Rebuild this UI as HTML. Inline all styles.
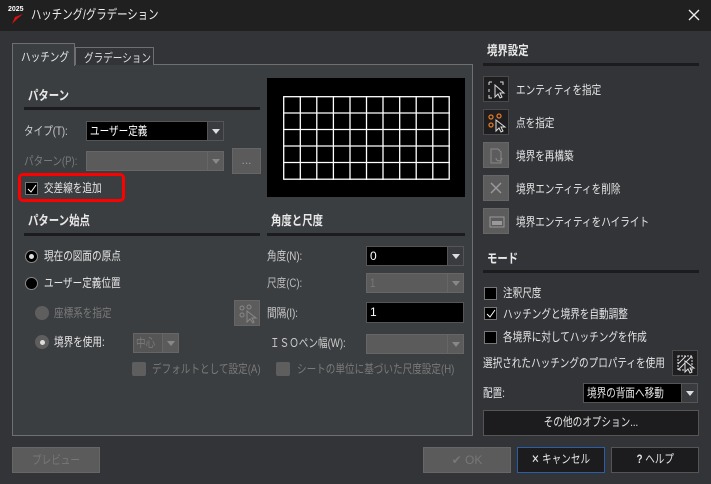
<!DOCTYPE html>
<html><head><meta charset="utf-8"><style>
*{box-sizing:border-box;margin:0;padding:0}
body{width:711px;height:484px;background:#333438;font-family:"Liberation Sans","Noto Sans CJK JP",sans-serif;font-size:12px;color:#e6e6e6;position:relative;overflow:hidden}
.a{position:absolute;white-space:nowrap}
.t{line-height:14px;transform:scaleX(0.8);transform-origin:0 0}
.s{display:inline-block;transform:scaleX(0.8)}
.dis{color:#7a7a7a}
.hdr{font-size:13px;font-weight:bold;color:#e8e8e8}
.line{position:absolute;height:3px;background:#1c1c1e}
.inp{position:absolute;background:#000;border:1px solid #555;color:#fff;padding-left:3px;line-height:18px}
.dd{position:absolute;background:#3a3b3e;border:1px solid #555}
.dd:after{content:"";position:absolute;left:4px;top:7px;border-left:4px solid transparent;border-right:4px solid transparent;border-top:5px solid #ddd}
.ddd{position:absolute;background:#5b5b5b;border:1px solid #666}
.dda{position:absolute;background:#5b5b5b;border:1px solid #666}
.dda:after{content:"";position:absolute;left:4px;top:7px;border-left:4px solid transparent;border-right:4px solid transparent;border-top:5px solid #888}
.cb{position:absolute;width:13px;height:13px;background:#000;border:1px solid #777}
.cbd{position:absolute;width:14px;height:14px;background:#5e5e5e;border-radius:2px}
.rad{position:absolute;width:13px;height:13px;border-radius:50%;background:#000;border:1px solid #888}
.btn{position:absolute;border:1px solid #555;background:#1c1c1e;color:#e6e6e6;text-align:center;line-height:23px}
.ib{position:absolute;width:26px;height:26px;border:1px solid #4a4a4a;background:#1e1e20}
.ibd{position:absolute;width:26px;height:26px;background:#5c5c5c;border:1px solid #666}
</style></head><body>
<div class="a" style="left:0;top:0;width:711px;height:31px;background:#202020"></div>
<div class="a" style="left:8px;top:6px;font-size:7px;font-weight:bold;color:#fff;line-height:8px">2025</div>
<svg class="a" style="left:11px;top:13px" width="14" height="12"><path d="M12 1 L4 4 L1 11 L6 6 Z" fill="#e01010"/></svg>
<div class="a t" style="left:31px;top:8px;font-size:13px;color:#f0f0f0">ハッチング/グラデーション</div>
<svg class="a" style="left:688px;top:9px" width="12" height="12"><path d="M1 1L11 11M11 1L1 11" stroke="#eee" stroke-width="1.3"/></svg>

<div class="a" style="left:12px;top:64px;width:461px;height:372px;background:#3b3e40;border:1px solid #6f6f6f"></div>
<div class="a" style="left:12px;top:43px;width:63px;height:23px;background:#3b3e40;border:1px solid #6f6f6f;border-bottom:none"></div>
<div class="a t" style="left:21px;top:50px">ハッチング</div>
<div class="a" style="left:75px;top:47px;width:79px;height:18px;background:#333438;border:1px solid #6f6f6f;border-bottom:none"></div>
<div class="a t" style="left:84px;top:51px;color:#ddd">グラデーション</div>

<div class="a t hdr" style="left:28px;top:89px">パターン</div>
<div class="line" style="left:24px;top:107px;width:236px"></div>
<div class="a t" style="left:24px;top:124px;color:#ccc">タイプ(T):</div>
<div class="inp" style="left:86px;top:121px;width:122px;height:20px"><span class="s" style="transform-origin:0 0">ユーザー定義</span></div>
<div class="dd" style="left:207px;top:121px;width:17px;height:20px"></div>
<div class="a t dis" style="left:24px;top:154px">パターン(P):</div>
<div class="ddd" style="left:86px;top:151px;width:122px;height:20px;border-right:none"></div>
<div class="dda" style="left:207px;top:151px;width:17px;height:20px"></div>
<div class="a" style="left:232px;top:148px;width:29px;height:26px;background:#5b5b5b;border:1px solid #666;color:#999;text-align:center;line-height:22px">...</div>
<div class="a" style="left:18px;top:173px;width:107px;height:29px;border:3px solid #f00;border-radius:5px"></div>
<div class="cb" style="left:25px;top:182px"></div>
<svg class="a" style="left:27px;top:184px" width="10" height="9"><path d="M1 5L4 8L9 1" stroke="#fff" fill="none" stroke-width="1"/></svg>
<div class="a t" style="left:44px;top:181px">交差線を追加</div>

<div class="a" style="left:267px;top:78px;width:198px;height:119px;background:#000"></div>
<svg class="a" style="left:283px;top:96px" width="167" height="84"><g stroke="#fff" stroke-width="1.3" fill="none">
<rect x="0.7" y="0.7" width="165.5" height="82.5"/>
<path d="M17.3 0V84M33.8 0V84M50.4 0V84M67 0V84M83.5 0V84M100 0V84M116.7 0V84M133.2 0V84M149.8 0V84M0 17H167M0 33.5H167M0 50H167M0 66.5H167"/></g></svg>

<div class="a t hdr" style="left:28px;top:214px">パターン始点</div>
<div class="line" style="left:24px;top:233px;width:236px"></div>
<div class="rad" style="left:25px;top:250px"></div><div class="a" style="left:29px;top:254px;width:5px;height:5px;border-radius:50%;background:#ddd"></div>
<div class="a t" style="left:44px;top:249px">現在の図面の原点</div>
<div class="rad" style="left:25px;top:277px"></div>
<div class="a t" style="left:44px;top:276px">ユーザー定義位置</div>
<div class="a" style="left:35px;top:306px;width:14px;height:14px;border-radius:50%;background:#5e5e5e"></div>
<div class="a t dis" style="left:54px;top:306px">座標系を指定</div>
<div class="ibd" style="left:234px;top:300px"></div>
<svg class="a" style="left:238px;top:304px" width="20" height="20"><g stroke="#888" fill="none"><circle cx="4" cy="4" r="2"/><circle cx="4" cy="11" r="2"/><circle cx="11" cy="3" r="2"/><path d="M9 7L9 18L12 15L15 19L16 18L14 14L18 14Z"/></g></svg>
<div class="a" style="left:35px;top:335px;width:14px;height:14px;border-radius:50%;background:#5e5e5e"></div><div class="a" style="left:40px;top:340px;width:5px;height:5px;border-radius:50%;background:#ddd"></div>
<div class="a t" style="left:54px;top:335px">境界を使用:</div>
<div class="a" style="left:133px;top:333px;width:30px;height:20px;background:#555;border:1px solid #666"></div>
<div class="a t dis" style="left:136px;top:336px">中心</div>
<div class="dda" style="left:162px;top:333px;width:17px;height:20px"></div>
<div class="cbd" style="left:132px;top:362px"></div>
<div class="a t dis" style="left:152px;top:362px">デフォルトとして設定(A)</div>

<div class="a t hdr" style="left:271px;top:214px">角度と尺度</div>
<div class="line" style="left:267px;top:233px;width:198px"></div>
<div class="a t" style="left:267px;top:249px;color:#ccc">角度(N):</div>
<div class="inp" style="left:366px;top:246px;width:82px;height:20px">0</div>
<div class="dd" style="left:447px;top:246px;width:17px;height:20px"></div>
<div class="a t" style="left:267px;top:276px;color:#bbb">尺度(C):</div>
<div class="ddd" style="left:366px;top:273px;width:82px;height:20px;border-right:none"></div>
<div class="a t dis" style="left:370px;top:276px">1</div>
<div class="dda" style="left:447px;top:273px;width:17px;height:20px"></div>
<div class="a t" style="left:267px;top:306px;color:#ccc">間隔(I):</div>
<div class="inp" style="left:366px;top:302px;width:98px;height:21px">1</div>
<div class="a t" style="left:270px;top:336px;color:#ccc">ＩＳＯペン幅(W):</div>
<div class="ddd" style="left:366px;top:334px;width:82px;height:20px;border-right:none"></div>
<div class="dda" style="left:447px;top:334px;width:17px;height:20px"></div>
<div class="cbd" style="left:276px;top:362px"></div>
<div class="a t dis" style="left:297px;top:362px">シートの単位に基づいた尺度設定(H)</div>

<div class="a t hdr" style="left:487px;top:44px">境界設定</div>
<div class="line" style="left:483px;top:63px;width:216px"></div>
<div class="ib" style="left:483px;top:76px"></div>
<svg class="a" style="left:487px;top:80px" width="20" height="20"><g stroke="#ddd" fill="none"><path d="M2 2h3M2 2v3M2 9v3M2 15v3h3M13 2h3v3"/><path d="M8 5L8 17L11 14L13 18L15 17L13 13L17 13Z"/></g></svg>
<div class="a t" style="left:516px;top:83px">エンティティを指定</div>
<div class="ib" style="left:483px;top:109px"></div>
<svg class="a" style="left:487px;top:113px" width="20" height="20"><g stroke="#e07820" fill="none" stroke-width="1.3"><circle cx="4" cy="4" r="2"/><circle cx="4" cy="12" r="2"/><circle cx="12" cy="3" r="2"/></g><path d="M9 7L9 18L12 15L14 19L16 18L14 14L18 14Z" stroke="#ddd" fill="none"/></svg>
<div class="a t" style="left:516px;top:116px">点を指定</div>
<div class="ibd" style="left:483px;top:142px"></div>
<svg class="a" style="left:487px;top:146px" width="20" height="20"><g stroke="#888" fill="none"><path d="M4 3h7l3 3v11H4z"/><path d="M9 12a3 3 0 1 0 6 0"/></g></svg>
<div class="a t" style="left:516px;top:149px">境界を再構築</div>
<div class="ibd" style="left:483px;top:175px"></div>
<svg class="a" style="left:489px;top:181px" width="14" height="14"><path d="M2 2L12 12M12 2L2 12" stroke="#999" stroke-width="1.5"/></svg>
<div class="a t" style="left:516px;top:182px">境界エンティティを削除</div>
<div class="ibd" style="left:483px;top:208px"></div>
<svg class="a" style="left:487px;top:212px" width="20" height="20"><rect x="3" y="5" width="14" height="10" stroke="#999" fill="none"/><rect x="5" y="9" width="10" height="4" fill="#999"/></svg>
<div class="a t" style="left:516px;top:215px">境界エンティティをハイライト</div>

<div class="a t hdr" style="left:487px;top:252px">モード</div>
<div class="line" style="left:483px;top:270px;width:216px"></div>
<div class="cb" style="left:484px;top:287px"></div>
<div class="a t" style="left:503px;top:286px">注釈尺度</div>
<div class="cb" style="left:484px;top:307px"></div>
<svg class="a" style="left:486px;top:309px" width="10" height="9"><path d="M1 5L4 8L9 1" stroke="#fff" fill="none"/></svg>
<div class="a t" style="left:503px;top:307px">ハッチングと境界を自動調整</div>
<div class="cb" style="left:484px;top:331px"></div>
<div class="a t" style="left:503px;top:330px">各境界に対してハッチングを作成</div>
<div class="a t" style="left:483px;top:356px">選択されたハッチングのプロパティを使用</div>
<div class="ib" style="left:672px;top:350px"></div>
<svg class="a" style="left:676px;top:354px" width="20" height="20"><g stroke="#ddd" fill="none"><path d="M2 2h14v14H2z" stroke-dasharray="2 1"/><path d="M2 10L10 2M2 16L16 2"/><path d="M9 7L9 18L12 15L14 19L16 18L14 14L18 14Z" fill="#1e1e20"/></g></svg>
<div class="a t" style="left:483px;top:386px">配置:</div>
<div class="inp" style="left:583px;top:383px;width:99px;height:20px"></div>
<div class="a t" style="left:587px;top:386px">境界の背面へ移動</div>
<div class="dd" style="left:681px;top:383px;width:17px;height:20px"></div>
<div class="btn" style="left:483px;top:410px;width:216px;height:26px"><span class="s">その他のオプション...</span></div>

<div class="a" style="left:12px;top:447px;width:88px;height:26px;background:#5b5b5b;border:1px solid #666;color:#777;text-align:center;line-height:24px"><span class="s">プレビュー</span></div>
<div class="a" style="left:423px;top:447px;width:88px;height:26px;background:#5b5b5b;border:1px solid #666;color:#777;text-align:center;line-height:24px">✔ OK</div>
<div class="btn" style="left:517px;top:447px;width:88px;height:26px;border-color:#2b5ea8"><span class="s">✕ キャンセル</span></div>
<div class="btn" style="left:611px;top:447px;width:88px;height:26px"><span class="s"><b>?</b> ヘルプ</span></div>
</body></html>
